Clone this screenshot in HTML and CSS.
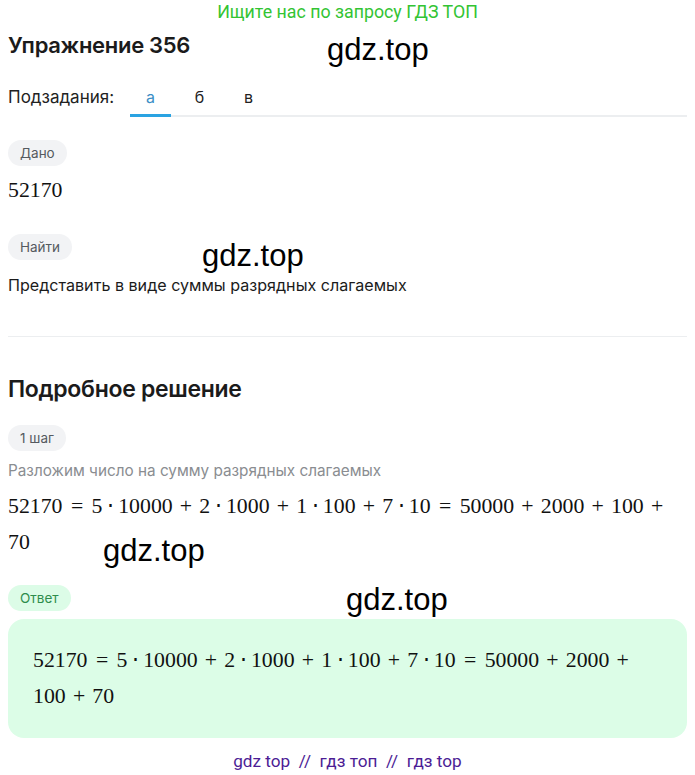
FILE: index.html
```html
<!DOCTYPE html>
<html lang="ru">
<head>
<meta charset="utf-8">
<title>Упражнение 356</title>
<link rel="stylesheet" href="styles.css">
</head>
<body>
<div class="banner">Ищите нас по запросу ГДЗ ТОП</div>
<main class="page">
  <h1 class="title">Упражнение 356</h1>
  <nav class="tabs">
    <span class="tabs-label">Подзадания:</span>
    <div class="tab-list">
      <span class="tab tab-active">а</span>
      <span class="tab">б</span>
      <span class="tab">в</span>
    </div>
  </nav>

  <section class="task">
    <span class="pill">Дано</span>
    <div class="math given"><span class="mn">52170</span></div>
    <span class="pill pill-find">Найти</span>
    <p class="text">Представить в виде суммы разрядных слагаемых</p>
  </section>

  <section class="solution">
    <h2 class="subtitle">Подробное решение</h2>
    <span class="pill pill-step">1 шаг</span>
    <p class="hint">Разложим число на сумму разрядных слагаемых</p>
    <div class="math step"><span class="mn">52170</span><span class="rel">=</span><span class="mn">5</span><span class="dot">⋅</span><span class="mn">10000</span><span class="bin">+</span><span class="mn">2</span><span class="dot">⋅</span><span class="mn">1000</span><span class="bin">+</span><span class="mn">1</span><span class="dot">⋅</span><span class="mn">100</span><span class="bin">+</span><span class="mn">7</span><span class="dot">⋅</span><span class="mn">10</span><span class="rel">=</span><span class="mn">50000</span><span class="bin">+</span><span class="mn">2000</span><span class="bin">+</span><span class="mn">100</span><span class="bin">+</span><br><span class="mn">70</span></div>

    <span class="pill pill-answer">Ответ</span>
    <div class="answer">
      <div class="math"><span class="mn">52170</span><span class="rel">=</span><span class="mn">5</span><span class="dot">⋅</span><span class="mn">10000</span><span class="bin">+</span><span class="mn">2</span><span class="dot">⋅</span><span class="mn">1000</span><span class="bin">+</span><span class="mn">1</span><span class="dot">⋅</span><span class="mn">100</span><span class="bin">+</span><span class="mn">7</span><span class="dot">⋅</span><span class="mn">10</span><span class="rel">=</span><span class="mn">50000</span><span class="bin">+</span><span class="mn">2000</span><span class="bin">+</span><br><span class="mn">100</span><span class="bin">+</span><span class="mn">70</span></div>
    </div>
  </section>

  <footer class="footer">gdz top &nbsp;//&nbsp; гдз топ &nbsp;//&nbsp; гдз top</footer>
</main>

<div class="wm wm-1">gdz.top</div>
<div class="wm wm-2">gdz.top</div>
<div class="wm wm-3">gdz.top</div>
<div class="wm wm-4">gdz.top</div>
</body>
</html>
```

FILE: styles.css
```css
* { box-sizing: border-box; }

html, body {
  margin: 0;
  padding: 0;
  background: #ffffff;
}

body {
  position: relative;
  font-family: Inter, Roboto, "Noto Sans", sans-serif;
  color: #1b1b1b;
  width: 695px;
  min-height: 775px;
  overflow: hidden;
}

.banner {
  height: 24px;
  line-height: 24px;
  text-align: center;
  font-family: Roboto, sans-serif;
  font-size: 17.8px;
  color: #33c433;
}

.page {
  padding: 0 8px;
}

.title {
  margin: 5px 0 0;
  height: 32px;
  line-height: 32px;
  font-size: 22px;
  font-weight: 600;
  letter-spacing: -0.3px;
}

.tabs {
  display: flex;
  align-items: stretch;
  margin-top: 18px;
  gap: 16px;
}

.tabs-label {
  line-height: 36px;
  font-size: 17px;
  color: #222;
}

.tab-list {
  flex: 1;
  display: flex;
  gap: 8px;
  border-bottom: 2px solid #eceef0;
}

.tab {
  width: 41px;
  height: 36px;
  line-height: 36px;
  text-align: center;
  font-size: 16px;
  color: #222;
}

.tab-active {
  color: #3a8fc6;
  box-shadow: inset 0 -3px 0 #2aa3e2;
  margin-bottom: -2px;
  height: 38px;
}

.task {
  padding-top: 23px;
  padding-bottom: 39px;
  border-bottom: 1px solid #eceef0;
}

.pill {
  display: inline-block;
  height: 26px;
  line-height: 26px;
  padding: 0 12px;
  border-radius: 13px;
  background: #f2f3f5;
  color: #555a60;
  font-size: 13.5px;
}

.pill-find { margin-top: 29px; }

.math {
  font-family: "Liberation Serif", "Times New Roman", serif;
  font-size: 21.8px;
  color: #111;
  white-space: nowrap;
}

.given {
  line-height: 30px;
  margin-top: 9px;
}

.rel, .bin {
  display: inline-block;
  width: 0.778em;
  text-align: center;
}

.rel { margin: 0 0.2778em; }
.bin { margin: 0 0.2222em; }

.dot {
  display: inline-block;
  width: 0.278em;
  text-align: center;
  margin: 0 0.2222em;
}

.text {
  margin: 13px 0 0;
  line-height: 24px;
  font-size: 16.1px;
}

.solution {
  padding-top: 36px;
}

.subtitle {
  margin: 0;
  height: 32px;
  line-height: 32px;
  font-size: 23px;
  font-weight: 600;
  letter-spacing: -0.3px;
}

.pill-step { margin-top: 20px; }

.hint {
  margin: 9px 0 0;
  line-height: 22px;
  font-size: 15.3px;
  color: #8a8d91;
}

.step {
  margin-top: 6px;
  line-height: 36px;
}

.pill-answer {
  margin-top: 25px;
  background: #dcfce7;
  color: #2e8d4c;
}

.answer {
  margin-top: 8px;
  background: #dcfde7;
  border-radius: 16px;
  padding: 23px 25px 24px;
}

.answer .math {
  line-height: 36px;
}

.footer {
  margin-top: 11px;
  line-height: 24px;
  text-align: center;
  font-family: Roboto, sans-serif;
  font-size: 17.2px;
  color: #4c1d95;
}

.wm {
  position: absolute;
  font-family: "Liberation Sans", Arial, sans-serif;
  font-size: 31px;
  line-height: 36px;
  color: #000;
}

.wm-1 { left: 327px; top: 32px; }
.wm-2 { left: 202px; top: 238px; }
.wm-3 { left: 103px; top: 533px; }
.wm-4 { left: 346px; top: 582px; }
```
